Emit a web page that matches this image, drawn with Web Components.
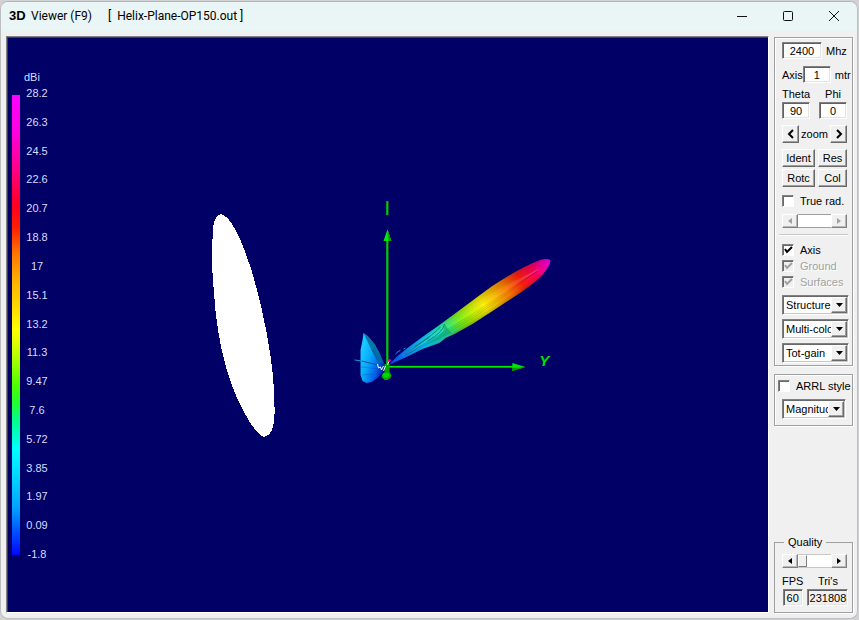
<!DOCTYPE html>
<html lang="en">
<head>
<meta charset="utf-8">
<title>3D Viewer (F9)</title>
<style>
html, body { height: 100%; margin: 0; }
body { background: #d2d2d5; font-family: "Liberation Sans", Arial, sans-serif; font-size: 11px; line-height: 14px; color: #000; }
</style>
</head>
<body>
<viewer-window>
  <title-bar slot="title" file="Helix-Plane-OP150.out"></title-bar>
  <scene-view></scene-view>
  <control-panel slot="side"></control-panel>
</viewer-window>
<script>
const base = `*{box-sizing:border-box} button,input,select{font:inherit;color:inherit;margin:0;padding:0;border-radius:0;outline-offset:-3px}`;
function define(name, render) {
  customElements.define(name, class extends HTMLElement {
    connectedCallback() {
      if (this.shadowRoot) return;
      this.attachShadow({ mode: 'open' }).innerHTML = render(this);
    }
  });
}

define('viewer-window', () => `<style>${base}
:host{display:flex;flex-direction:column;min-height:100vh;box-sizing:border-box;padding:1px 1px 1px 0}
.win{flex:1;display:flex;flex-direction:column;background:#f0f0f0;border:1px solid #bcbec0;border-top-color:#b4b4b6;border-radius:8px;overflow:hidden}
.body{flex:1;display:flex;gap:5px;padding:5px 4px 5px 5px}
main{flex:1;display:flex;min-width:0}
</style><div class="win"><slot name="title"></slot><div class="body"><main><slot></slot></main><slot name="side"></slot></div></div>`);

define('title-bar', el => `<style>${base}
:host{display:flex;align-items:center;height:29px;box-sizing:border-box;padding-bottom:2px;background:#eaf5f5;font-family:Roboto,"Open Sans",sans-serif;font-size:12px}
b{font:bold 13px/16px "Liberation Sans",Arial,sans-serif;margin-left:8px;width:22px}
h1{flex:1;font:inherit;margin:0;white-space:pre;display:flex;gap:16px}
button{width:46px;height:27px;border:0;background:none;display:grid;place-items:center}
svg{width:12px;height:12px;fill:none;stroke:#111;stroke-width:1}
</style><b>3D</b><h1><span>Viewer (F9)</span><span>[  ${el.getAttribute('file')} ]</span></h1>
<button aria-label="Minimize"><svg viewBox="0 0 12 12"><path d="M1 6.5h10"/></svg></button>
<button aria-label="Maximize"><svg viewBox="0 0 12 12"><rect x="1.500" y="1.500" width="9" height="9" rx="1"/></svg></button>
<button aria-label="Close"><svg viewBox="0 0 12 12"><path d="M1 1l10 10M11 1L1 11"/></svg></button>`);

define('gain-scale', () => {
  const v = ['28.2','26.3','24.5','22.6','20.7','18.8','17','15.1','13.2','11.3','9.47','7.6','5.72','3.85','1.97','0.09','-1.8'];
  return `<style>${base}
:host{display:grid;grid-template-columns:8px 32px;grid-template-rows:14px 1fr;row-gap:2px;color:#d8dcff;width:40px}
.unit{grid-column:2;padding-left:4px}
.bar{margin:9px 0 6px;background:linear-gradient(#ff00ff 0,#ff00e0 8%,#ff00a0 14%,#ff0060 19%,#ff0020 24%,#ff2000 29%,#ff7000 34%,#ffb000 40%,#ffd800 46%,#ffff00 51%,#e0ff00 54%,#a0ff00 58%,#50ff00 63%,#20ff30 67%,#00ff90 71%,#00ffff 77%,#00d0ff 84%,#00a0ff 90%,#0050ff 95%,#0008ff 100%)}
ol{list-style:none;margin:0;padding:0 0 0 2px;display:flex;flex-direction:column;justify-content:space-between;text-align:center}
</style><span class="unit">dBi</span><div class="bar"></div><ol>${v.map(t => `<li>${t}</li>`).join('')}</ol>`;
});

define('scene-view', () => {
  // Fine surface lines that follow the main lobe from the origin to its tip.
  let rays = '';
  for (let i = -3; i <= 3; i++) {
    rays += `<path d="M404 356Q${471 + i * 2} ${313 + i * 3} 540 269" stroke="${i > 0 ? '#000' : '#fff'}" stroke-opacity=".1"/>`;
  }
  const lobe = 'M389 365L397 357 408 348 423 337 440 325C458 312 475 299 493 286C508 276 525 266 541 260Q548 258 551 260Q552 264 543 275C532 286 522 292 513 298L490 313 473 324 455 334 446 338 440 343 423 349 407 357 398 361Z';
  return `<style>${base}
:host{flex:1;display:flex;position:relative;min-width:0;background:#000066;border:1px solid;border-color:#808080 #fff #fff #808080;box-shadow:inset 1px 1px #404048}
gain-scale{margin:33px 0 51px 5px}
svg{position:absolute;inset:0;width:100%;height:100%}
text{font:italic bold 15px "Liberation Sans",Arial,sans-serif;fill:#00e000}
</style><gain-scale></gain-scale>
<svg viewBox="7 37 762 575" role="img" aria-label="Radiation pattern">
<defs>
<linearGradient id="lobe" gradientUnits="userSpaceOnUse" x1="388" y1="366" x2="551" y2="262">
<stop offset="0" stop-color="#0038e8"/><stop offset=".1" stop-color="#0878f0"/><stop offset=".22" stop-color="#08c0f4"/><stop offset=".32" stop-color="#18e0c8"/><stop offset=".38" stop-color="#38e870"/><stop offset=".44" stop-color="#78f018"/><stop offset=".52" stop-color="#c8f400"/><stop offset=".59" stop-color="#fff000"/><stop offset=".66" stop-color="#ffc000"/><stop offset=".74" stop-color="#ff7800"/><stop offset=".82" stop-color="#ff2010"/><stop offset=".9" stop-color="#ff0058"/><stop offset=".96" stop-color="#f000a8"/><stop offset="1" stop-color="#e800e0"/></linearGradient>
<linearGradient id="shade" gradientUnits="userSpaceOnUse" x1="465" y1="306" x2="478" y2="327">
<stop offset="0" stop-color="#000" stop-opacity=".15"/><stop offset=".4" stop-color="#000" stop-opacity="0"/><stop offset=".6" stop-color="#000" stop-opacity=".08"/><stop offset="1" stop-color="#000" stop-opacity=".45"/></linearGradient>
<linearGradient id="back" gradientUnits="userSpaceOnUse" x1="361" y1="356" x2="386" y2="364">
<stop offset="0" stop-color="#18c8ff"/><stop offset=".35" stop-color="#08a8f8"/><stop offset=".7" stop-color="#0068f0"/><stop offset="1" stop-color="#0020a8"/></linearGradient>
</defs>
<path fill="#fff" shape-rendering="crispEdges" d="M221 214C215 215 213 224 213 235C212 250 212 270 214 290C216 320 220 345 226 366C232 388 240 406 250 422C256 431 261 437 265 437C271 436 275 428 275 412C275 385 272 359 267 333C262 306 255 278 247 256C240 236 230 215 221 214Z"/>
<path fill="url(#back)" d="M364 333L368 336 375 344 380 353 384 362 386 367 383 373 378 378 372 382 367 383 363 381 361 375 361 350 363 340Z"/>
<path fill="#006c98" opacity=".85" d="M364 333L368 336 375 344 380 353 384 363 378 362 373 352Z"/>
<path stroke="#003080" stroke-opacity=".4" fill="none" stroke-dasharray="2 1" d="M362 367l18 2M363 375l12 -1M373 350l6 11"/>
<path stroke="#1498e8" fill="none" d="M355 360L362 361"/>
<path stroke="#0050a0" fill="none" d="M362 361L382 366"/>
<path fill="url(#lobe)" d="${lobe}"/>
<path fill="url(#shade)" d="${lobe}"/>
<g fill="none">${rays}</g>
<path fill="#109c70" opacity=".6" d="M445 324L444 331 438 337 426 345 437 341 452 333Z"/>
<path fill="none" stroke="#087850" stroke-opacity=".8" d="M445 324Q444 332 428 341M441 327Q436 333 415 347M430 337L405 355"/>
<path fill="none" stroke="#0888d8" d="M396 354l5-4M398 352l2-1M404 349l2-1"/>
<g fill="#00a800"><rect x="387" y="201" width="2" height="14"/><rect x="387" y="240" width="2" height="126"/><rect x="388" y="366" width="126" height="2"/></g>
<g fill="#00f000"><rect x="387" y="201" width="1" height="14"/><rect x="387" y="240" width="1" height="126"/><rect x="388" y="366" width="126" height="1"/></g>
<path fill="#00e800" d="M388 229L392 241H384ZM526 367L513 371V363Z"/>
<path fill="#009800" d="M388 229L392 241H389ZM526 367L513 371V368Z"/>
<path fill="#00a800" d="M385 364h5v8l2 3-1 3-3 2h-3l-3-3 1-3 2-2z"/>
<path fill="#00d800" d="M384 373h5l1 3-3 2-4-2z"/>
<path fill="none" stroke="#fff" d="M378 364l1 4 2-1 1 3 2-4M384 371l2-5M388 365l2-5"/>
<path fill="none" stroke="#ff00b0" stroke-width="2" d="M388 361l3-1"/>
<text x="540" y="366">Y</text>
</svg>`;
});

define('group-panel', el => `<style>${base}
:host{display:block}
fieldset{margin:0;min-width:0;border:1px solid #a0a0a0;box-shadow:1px 1px #fff,inset 1px 1px #fff;padding:0 4px 2px 7px}
fieldset.t{box-shadow:1px 1px #fff;padding-bottom:6px}
legend{margin-left:2px;padding:0 4px;height:14px}
</style><fieldset class="${el.hasAttribute('label') ? 't' : ''}">${el.hasAttribute('label') ? `<legend>${el.getAttribute('label')}</legend>` : ''}<slot></slot></fieldset>`);

// Sunken number box; the label stands before, after or above it.
define('value-field', el => {
  const g = n => el.getAttribute(n) || '';
  return `<style>${base}
:host{display:block}
label{display:flex;align-items:center;gap:${g('gap') || 0}px}
label.above{flex-direction:column;gap:1px}
input{width:${g('width')}px;height:17px;border:1px solid;border-color:#808080 #fff #fff #808080;box-shadow:inset 1px 1px #606060,inset -1px -1px #e3e3e3;background:${el.hasAttribute('readonly') ? '#f0f0f0' : '#fff'};text-align:center}
.unit{margin-left:4px}
</style><label class="${g('place')}">${g('place') !== 'after' ? `<span>${g('label')}</span>` : ''}<input type="text" value="${g('value')}" ${el.hasAttribute('readonly') ? 'readonly' : ''}>${g('place') === 'after' ? `<span>${g('label')}</span>` : ''}${g('unit') ? `<span class="unit">${g('unit')}</span>` : ''}</label>`;
});

define('push-button', el => `<style>${base}
:host{display:block}
button{width:100%;height:18px;display:grid;place-items:center;background:#f0f0f0;border:1px solid;border-color:#fff #696969 #696969 #fff;box-shadow:inset -1px -1px #a0a0a0}
svg{width:8px;height:10px;fill:none;stroke:#000;stroke-width:2}
</style><button ${el.title ? `aria-label="${el.title}"` : ''}><slot></slot>${el.hasAttribute('dir') ? `<svg viewBox="0 0 8 10"><path d="${el.getAttribute('dir') === 'ltr' ? 'M2 1l4 4-4 4' : 'M6 1l-4 4 4 4'}"/></svg>` : ''}</button>`);

define('check-option', el => {
  const off = el.hasAttribute('disabled');
  return `<style>${base}
:host{display:block;white-space:nowrap}
label{display:flex;align-items:center;gap:6px;height:16px;color:${off ? '#a0a0a0' : '#000'};${off ? 'text-shadow:1px 1px #fff' : ''}}
.box{display:grid;width:12px;height:12px;flex:none}
.box>*{grid-area:1/1}
input{appearance:none;width:12px;height:12px;background:${off ? '#f0f0f0' : '#fff'};border:1px solid;border-color:#808080 #fff #fff #808080;box-shadow:inset 1px 1px #696969}
svg{width:12px;height:12px;fill:none;stroke:currentColor;stroke-width:2;pointer-events:none;visibility:hidden}
input:checked+svg{visibility:visible}
</style><label><span class="box"><input type="checkbox" ${el.hasAttribute('checked') ? 'checked' : ''} ${off ? 'disabled' : ''}><svg viewBox="0 0 12 12"><path d="M3 5l2 3 5-5"/></svg></span><span><slot></slot></span></label>`;
});

define('drop-down', el => `<style>${base}
:host{display:block}
div{display:grid;grid-template-columns:1fr 16px;height:20px;border:1px solid;border-color:#808080 #fff #fff #808080;box-shadow:inset 1px 1px #696969,inset -1px -1px #c8c8c8;background:#fff;padding:1px 1px 1px 2px}
select{appearance:none;min-width:0;width:100%;border:0;background:transparent;padding:0 0 0 1px;overflow:hidden;text-overflow:clip;height:16px}
i{display:grid;place-items:center;background:#f0f0f0;border:1px solid;border-color:#fff #696969 #696969 #fff;box-shadow:inset -1px -1px #a0a0a0;pointer-events:none}
svg{width:7px;height:4px}
</style><div><select aria-label="${el.getAttribute('label')}"><option>${el.getAttribute('value')}</option></select><i><svg viewBox="0 0 7 4"><path d="M0 0h7L3.500 4z"/></svg></i></div>`);

define('scroll-slider', el => {
  const off = el.hasAttribute('disabled');
  return `<style>${base}
:host{display:block}
div{display:grid;grid-template-columns:16px 1fr 16px;height:14px;background:#fff}
button{display:grid;place-items:center;background:#f0f0f0;border:1px solid;border-color:#fff #808080 #808080 #fff;box-shadow:inset -1px -1px #b8b8b8}
svg{width:4px;height:6px;fill:${off ? '#a0a0a0' : '#000'}}
input{appearance:none;width:100%;min-width:0;height:14px;background:#fff;border:solid ${off ? '#a0a0a0' : '#c8c8c8'};border-width:1px 0}
input::-webkit-slider-thumb{appearance:none;width:${off ? 0 : 9}px;height:12px;background:#f0f0f0;border:${off ? 0 : 1}px solid;border-color:#fff #808080 #808080 #fff}
</style><div><button aria-label="Decrease" ${off ? 'disabled' : ''}><svg viewBox="0 0 4 6"><path d="M4 0v6L0 3z"/></svg></button><input type="range" value="0" aria-label="${el.getAttribute('label')}" ${off ? 'disabled' : ''}><button aria-label="Increase" ${off ? 'disabled' : ''}><svg viewBox="0 0 4 6"><path d="M0 0v6l4-3z"/></svg></button></div>`;
});

define('control-panel', () => `<style>${base}
:host{display:flex;flex-direction:column;width:79px;flex:none;gap:8px;padding-top:1px}
.row{display:flex;align-items:center;white-space:nowrap}
.pair{justify-content:space-between;width:65px}
.first{margin-top:4px}
.axis{margin-top:7px}
.angles{margin-top:4px}
.keys{display:grid;grid-template-columns:33px 29px;gap:2px 3px;margin-top:6px}
.zoom{margin-top:6px}
.zoom push-button{width:17px}
hr{border:0;border-top:1px solid #c8c8c8;border-bottom:1px solid #fff;margin:6px 0 6px -3px}
scroll-slider{width:65px}
.lists{display:grid;gap:4px;margin-top:5px;width:67px}
.radius{margin:6px 0 5px}
.arrl{margin:3px 0 5px -4px}
.quantity{width:64px;margin-bottom:4px}
.end{margin-top:auto}
.quality{margin-top:5px}
.counts{gap:4px;margin-top:6px}
</style>
<group-panel>
<value-field class="first" place="after" label="Mhz" value="2400" width="40" gap="4"></value-field>
<value-field class="axis" label="Axis" unit="mtr" value="1" width="28" gap="0"></value-field>
<div class="row pair angles"><value-field place="above" label="Theta" value="90" width="28"></value-field><value-field place="above" label="Phi" value="0" width="28"></value-field></div>
<div class="row pair zoom"><push-button dir="rtl" title="Zoom out"></push-button><span>zoom</span><push-button dir="ltr" title="Zoom in"></push-button></div>
<div class="keys"><push-button>Ident</push-button><push-button>Res</push-button><push-button>Rotc</push-button><push-button>Col</push-button></div>
<check-option class="radius">True rad.</check-option>
<scroll-slider label="Radius" disabled></scroll-slider>
<hr>
<check-option checked>Axis</check-option><check-option checked disabled>Ground</check-option><check-option checked disabled>Surfaces</check-option>
<div class="lists"><drop-down label="Show" value="Structure"></drop-down><drop-down label="Colours" value="Multi-color"></drop-down><drop-down label="Gain" value="Tot-gain"></drop-down></div>
</group-panel>
<group-panel><check-option class="arrl">ARRL style</check-option><drop-down class="quantity" label="Quantity" value="Magnitude"></drop-down></group-panel>
<group-panel class="end" label="Quality"><scroll-slider class="quality" label="Quality"></scroll-slider>
<div class="row counts"><value-field place="above" label="FPS" value="60" width="20" readonly></value-field><value-field place="above" label="Tri's" value="231808" width="41" readonly></value-field></div>
</group-panel>`);
</script>
</body>
</html>
